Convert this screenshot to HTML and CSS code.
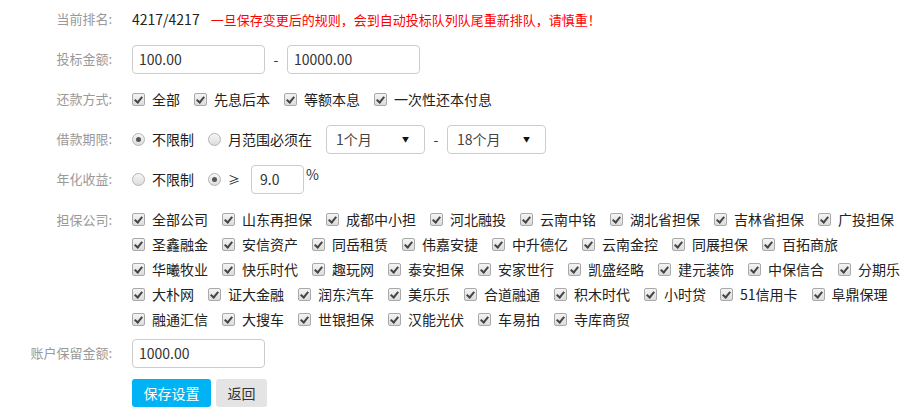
FILE: index.html
```html
<!DOCTYPE html>
<html lang="zh-CN">
<head>
    <meta charset="UTF-8">
    <title>自动投标设置</title>
    <link rel="stylesheet" href="styles.css">
</head>
<body>

    <div class="setting-form">

        <div class="row">
            <span class="label">当前排名:</span>
            <div class="field">
                <span class="rank">4217/4217</span>
                <span class="warn">一旦保存变更后的规则，会到自动投标队列队尾重新排队，请慎重！</span>
            </div>
        </div>

        <div class="row">
            <span class="label">投标金额:</span>
            <div class="field">
                <input class="text-input" type="text" value="100.00">
                <span class="dash">-</span>
                <input class="text-input" type="text" value="10000.00">
            </div>
        </div>

        <div class="row">
            <span class="label">还款方式:</span>
            <div class="field">
                <label class="opt"><span class="cb"></span>全部</label>
                <label class="opt"><span class="cb"></span>先息后本</label>
                <label class="opt"><span class="cb"></span>等额本息</label>
                <label class="opt"><span class="cb"></span>一次性还本付息</label>
            </div>
        </div>

        <div class="row">
            <span class="label">借款期限:</span>
            <div class="field">
                <label class="opt"><span class="radio on"></span>不限制</label>
                <label class="opt"><span class="radio"></span>月范围必须在</label>
                <div class="select"><span>1个月</span><span class="arrow">▼</span></div>
                <span class="dash">-</span>
                <div class="select"><span>18个月</span><span class="arrow">▼</span></div>
            </div>
        </div>

        <div class="row">
            <span class="label">年化收益:</span>
            <div class="field">
                <label class="opt"><span class="radio"></span>不限制</label>
                <label class="opt ge"><span class="radio on"></span>≥</label>
                <input class="text-input small" type="text" value="9.0">
                <span class="pct">%</span>
            </div>
        </div>

        <div class="row companies">
            <span class="label">担保公司:</span>
            <div class="field wrap" id="companyList"></div>
        </div>

        <div class="row">
            <span class="label">账户保留金额:</span>
            <div class="field">
                <input class="text-input" type="text" value="1000.00">
            </div>
        </div>

        <div class="row">
            <span class="label"></span>
            <div class="field">
                <button class="btn btn-save">保存设置</button>
                <button class="btn btn-back">返回</button>
            </div>
        </div>

    </div>

    <script>
        var companies = [
            "全部公司", "山东再担保", "成都中小担", "河北融投", "云南中铭", "湖北省担保", "吉林省担保", "广投担保",
            "圣鑫融金", "安信资产", "同岳租赁", "伟嘉安捷", "中升德亿", "云南金控", "同展担保", "百拓商旅",
            "华曦牧业", "快乐时代", "趣玩网", "泰安担保", "安家世行", "凯盛经略", "建元装饰", "中保信合", "分期乐",
            "大朴网", "证大金融", "润东汽车", "美乐乐", "合道融通", "积木时代", "小时贷", "51信用卡", "阜鼎保理",
            "融通汇信", "大搜车", "世银担保", "汉能光伏", "车易拍", "寺库商贸"
        ];
        var list = document.getElementById("companyList");

        companies.forEach(function (name) {
            var item = document.createElement("label");
            item.className = "opt";
            item.innerHTML = '<span class="cb"></span>' + name;
            list.appendChild(item);
        });
    </script>

</body>
</html>
```

FILE: styles.css
```css
body {
    margin: 0;
    background: #fff;
    font-family: "Noto Sans CJK SC", "Liberation Sans", sans-serif;
    font-size: 14px;
    color: #222;
}

.setting-form {
    padding-top: 4px;
    width: 913px;
}

.row {
    display: flex;
    align-items: flex-start;
    margin-bottom: 10px;
}

.label {
    width: 112px;
    flex: none;
    text-align: right;
    font-size: 13px;
    line-height: 30px;
    color: #999;
}

.field {
    margin-left: 20px;
    display: flex;
    align-items: center;
    min-height: 30px;
    flex: 1;
}

.field.wrap {
    flex-wrap: wrap;
    column-gap: 14px;
    line-height: 25px;
    min-height: 0;
}

.field.wrap .opt {
    margin-right: 0;
}

.companies {
    padding-top: 3px;
    margin-bottom: 6px;
}

.companies .label {
    line-height: 25px;
}

.rank {
    color: #222;
    margin-right: 11px;
}

.warn {
    color: #f00;
    font-size: 13px;
}

.text-input {
    width: 133px;
    height: 29px;
    box-sizing: border-box;
    border: 1px solid #ccc;
    border-radius: 4px;
    padding: 0 6px;
    font-family: "Noto Sans CJK SC", "Liberation Sans", sans-serif;
    font-size: 14px;
    color: #333;
    outline: none;
}

.text-input.small {
    width: 53px;
    padding-left: 8px;
}

.dash {
    width: 22px;
    text-align: center;
    color: #333;
}

.opt {
    display: inline-flex;
    align-items: center;
    margin-right: 14px;
    white-space: nowrap;
    height: 25px;
}

.opt.ge {
    margin-right: 11px;
    font-size: 12px;
}

.cb {
    width: 11px;
    height: 11px;
    border: 1px solid #a9a9a9;
    border-radius: 2px;
    background: linear-gradient(#f4f4f4, #dcdcdc);
    margin-right: 7px;
    position: relative;
    flex: none;
}

.cb::after {
    content: "";
    position: absolute;
    left: 3px;
    top: 1px;
    width: 3px;
    height: 6px;
    border: solid #444;
    border-width: 0 2px 2px 0;
    transform: rotate(40deg);
}

.radio {
    width: 11px;
    height: 11px;
    border: 1px solid #b4b4b4;
    border-radius: 50%;
    background: linear-gradient(#f6f6f6, #dddddd);
    margin-right: 7px;
    position: relative;
    flex: none;
}

.radio.on::after {
    content: "";
    position: absolute;
    left: 3px;
    top: 3px;
    width: 5px;
    height: 5px;
    border-radius: 50%;
    background: #555;
}

.select {
    width: 99px;
    height: 29px;
    box-sizing: border-box;
    border: 1px solid #ccc;
    border-radius: 4px;
    padding: 0 15px 0 9px;
    display: flex;
    align-items: center;
    justify-content: space-between;
    color: #444;
}

.arrow {
    font-size: 7px;
    color: #111;
}

.pct {
    align-self: flex-start;
    margin-left: 2px;
    line-height: 20px;
    color: #333;
}

.btn {
    height: 28px;
    border: none;
    border-radius: 3px;
    font-family: "Noto Sans CJK SC", "Liberation Sans", sans-serif;
    font-size: 14px;
    cursor: pointer;
    padding: 0;
}

.btn-save {
    width: 79px;
    background-color: #00b3f5;
    color: #fff;
}

.btn-back {
    width: 51px;
    margin-left: 5px;
    background-color: #e4e4e4;
    color: #333;
}
```
